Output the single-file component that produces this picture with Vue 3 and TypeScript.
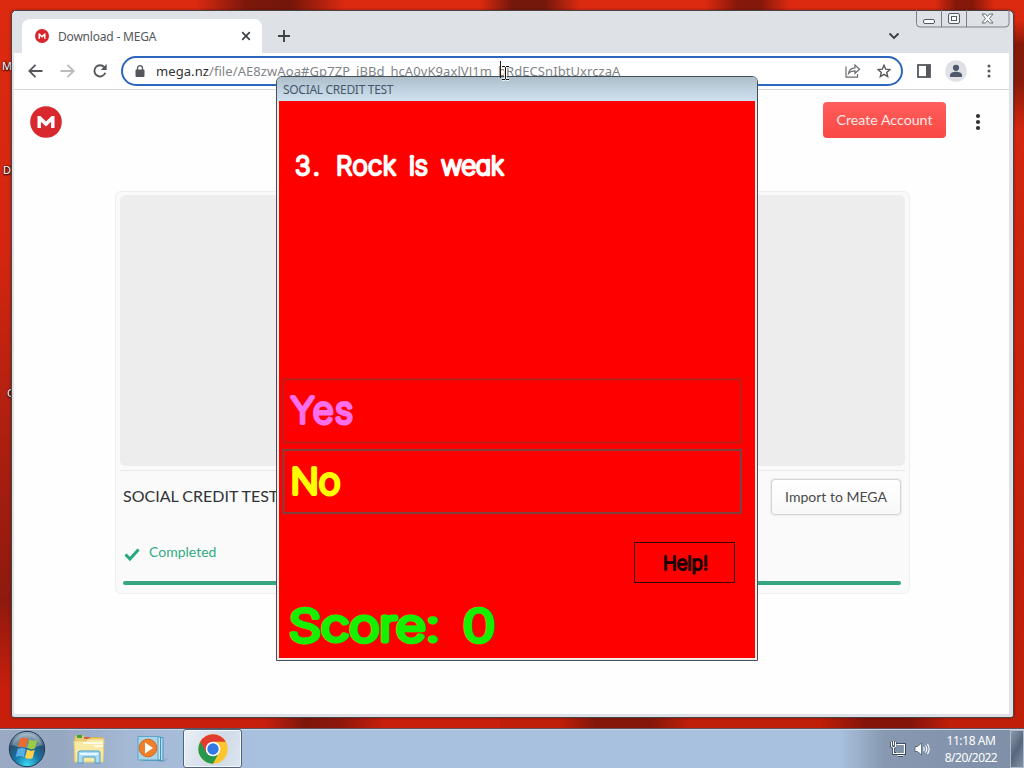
<script setup lang="ts">
interface Word { text: string; x: number; w: number }
const question: Word[] = [
  { text: '3.', x: 294, w: 26 },
  { text: 'Rock', x: 335, w: 61 },
  { text: 'is', x: 408, w: 20 },
  { text: 'weak', x: 440, w: 64 },
]
const desktopLabels = [
  { t: 'M', c: 'dl1' },
  { t: 'D', c: 'dl2' },
  { t: 'G', c: 'dl3' },
]
</script>

<template>
  <div class="desktop">
    <span v-for="l in desktopLabels" :key="l.c" class="dlabel" :class="l.c">{{ l.t }}</span>

    <div class="browser">
      <div class="strip">
        <div class="tab">
          <svg class="fav" width="14" height="14" viewBox="0 0 32 32"><circle cx="16" cy="16" r="16" fill="#d9272e" /><path d="M8 22V10h3l5 5.500 5-5.500h3v12h-3.500v-6L16 20l-4.500-4v6z" fill="#fff" /></svg>
          <span class="tabtitle">Download - MEGA</span>
          <svg width="10" height="10" viewBox="0 0 10 10"><path d="M1.200 1.200l7.600 7.600M8.800 1.200L1.200 8.800" stroke="#3c4043" stroke-width="1.700" /></svg>
        </div>
        <svg class="plus" width="12" height="12" viewBox="0 0 12 12"><path d="M6 0v12M0 6h12" stroke="#3c4043" stroke-width="1.900" /></svg>
        <svg class="chev" width="12" height="8" viewBox="0 0 12 8"><path d="M1.500 1.500L6 6l4.500-4.500" fill="none" stroke="#3c4043" stroke-width="1.900" /></svg>
        <svg class="controls" width="94" height="19" viewBox="0 0 94 19">
          <path d="M.5 0v13.500q0 3.500 3.500 3.500h85q4 0 4-3.500V0M25.500 0v17M50.500 0v17" fill="none" stroke="#7d8187" />
          <rect x="7.500" y="9.500" width="11" height="4" rx="1.500" fill="#fff" stroke="#555b66" />
          <rect x="32.500" y="3.500" width="11" height="10" rx="1.500" fill="#f4f5f7" stroke="#555b66" />
          <rect x="35.500" y="6.500" width="5" height="4" fill="#fff" stroke="#555b66" />
          <path d="M66 4h3.500l2 2.500L73.500 4H77l-3.500 4.500L77 13h-3.500l-2-2.500-2 2.500H66l3.500-4.500z" fill="#fff" stroke="#5a606a" stroke-width=".9" />
        </svg>
      </div>
      <div class="toolbar">
        <svg class="nav" width="86" height="20" viewBox="0 0 86 20">
          <path d="M16.500 10H3.500M9.500 3.800L3.300 10l6.200 6.200" fill="none" stroke="#54585c" stroke-width="1.800" />
          <path d="M34.500 10h13M41.500 3.800L47.700 10l-6.200 6.200" fill="none" stroke="#b9bbbe" stroke-width="1.800" />
          <path d="M78.300 6.200A5.600 5.600 0 1 0 79.300 11.700" fill="none" stroke="#54585c" stroke-width="1.900" /><path d="M80.700 3v6h-6z" fill="#54585c" />
        </svg>
        <div class="omni">
          <svg width="10" height="12" viewBox="0 0 10 12"><rect x=".5" y="4.500" width="9" height="7.500" rx="1" fill="#54585c" /><path d="M2.500 5V3.200a2.500 2.500 0 0 1 5 0V5" fill="none" stroke="#54585c" stroke-width="1.300" /></svg>
          <span class="url"><b>mega.nz</b>/file/AE8zwAoa#Gp7ZP_jBBd_hcA0vK9axlVJ1m_bRdECSnIbtUxrczaA</span>
          <svg class="share" width="16" height="14" viewBox="0 0 16 14"><path d="M1 2.500v10.700h11.500V10M3.500 9.500C4 5.500 6.500 4 10 3.800V1l4.500 4.300L10 9.300V6.800C7 6.800 5 7.500 3.500 9.500z" fill="none" stroke="#686c70" stroke-width="1.200" /></svg>
          <svg width="14" height="14" viewBox="0 0 14 14"><path d="M7 1.300l1.700 3.900 4.200.4-3.200 2.800 1 4.200L7 10.400l-3.700 2.200 1-4.200L1.100 5.600l4.200-.4z" fill="none" stroke="#54585c" stroke-width="1.400" /></svg>
        </div>
        <svg class="panel" width="14" height="14" viewBox="0 0 14 14"><rect x="1" y="1" width="12" height="12" fill="#fff" stroke="#54585c" stroke-width="1.800" /><path d="M9 1h4v12H9z" fill="#54585c" /></svg>
        <svg class="user" width="22" height="22" viewBox="0 0 22 22"><circle cx="11" cy="11" r="10.800" fill="#dfe1e7" /><circle cx="11" cy="7.800" r="3.100" fill="#50596b" /><path d="M5 17v-1.800c0-2.500 3-3.500 6-3.500s6 1 6 3.500V17z" fill="#50596b" /></svg>
        <svg class="more" width="4" height="14" viewBox="0 0 4 14"><circle cx="2" cy="2" r="1.500" fill="#54585c" /><circle cx="2" cy="7" r="1.500" fill="#54585c" /><circle cx="2" cy="12" r="1.500" fill="#54585c" /></svg>
      </div>
      <div class="page">
        <header>
          <svg width="32" height="32" viewBox="0 0 32 32"><circle cx="16" cy="16" r="15.800" fill="#d9272e" /><path d="M7.500 22V10h2.900l5.600 5.500 5.600-5.500h2.900v12h-3.400v-6.200L16 20.600l-5.100-4.800V22z" fill="#fff" /></svg>
          <div class="create">Create Account</div>
          <svg class="kebab" width="6" height="18" viewBox="0 0 6 18"><circle cx="3" cy="3" r="2.100" fill="#333" /><circle cx="3" cy="9" r="2.100" fill="#333" /><circle cx="3" cy="15" r="2.100" fill="#333" /></svg>
        </header>
        <main class="card">
          <div class="preview"></div>
          <div class="row">
            <span class="fname">SOCIAL CREDIT TEST</span>
            <div class="import">Import to MEGA</div>
          </div>
          <div class="status">
            <svg width="16" height="13" viewBox="0 0 16 13"><path d="M1.500 6.500l4.500 4.500 8.500-9.500" fill="none" stroke="#23a97a" stroke-width="3" /></svg>
            <span>Completed</span>
          </div>
          <div class="bar"></div>
        </main>
      </div>
    </div>

    <div class="dialog">
      <div class="title">SOCIAL CREDIT TEST</div>
      <div class="body">
        <svg width="476" height="557" viewBox="279 101 476 557" class="hand">
          <g fill="#fff" stroke="#fff" stroke-width="2.600" font-size="26">
            <text v-for="q in question" :key="q.text" :x="q.x + 1" y="175" :textLength="q.w - 1">{{ q.text }}</text>
          </g>
          <rect x="283.500" y="379.500" width="457" height="63" fill="none" stroke="#a52a20" stroke-width="1.500" />
          <rect x="283.500" y="450" width="457.500" height="63" fill="none" stroke="#81403c" stroke-width="2.200" />
          <g font-size="35.500" stroke-width="4">
            <text x="291" y="422.500" textLength="62" fill="#fa6eea" stroke="#fa6eea">Yes</text>
            <text x="290.500" y="494" textLength="50" lengthAdjust="spacingAndGlyphs" fill="#ff0" stroke="#ff0">No</text>
          </g>
          <rect x="634.500" y="542.500" width="100" height="40" fill="none" stroke="#3a0000" />
          <text x="663" y="569.500" font-size="18.500" stroke-width="2" textLength="45" fill="#190000" stroke="#190000">Help!</text>
          <g font-size="43" stroke-width="5" fill="#16f000" stroke="#16f000">
            <text x="289" y="641" textLength="151" lengthAdjust="spacingAndGlyphs">Score:</text>
            <text x="463" y="641" textLength="32" lengthAdjust="spacingAndGlyphs">0</text>
          </g>
        </svg>
      </div>
    </div>

    <svg class="caret" width="12" height="22" viewBox="0 0 12 22"><path d="M1.500 1v17" stroke="#222" /><path d="M3 6.500h3M7 6.500h3M6.500 7v12M3 19.500h3M7 19.500h3" stroke="#fff" stroke-width="2.500" /><path d="M3 6.500h3M7 6.500h3M6.500 7v12M3 19.500h3M7 19.500h3" stroke="#111" fill="none" /></svg>

    <div class="taskbar">
      <svg class="orb" width="38" height="38" viewBox="0 0 38 38">
        <defs>
          <radialGradient id="orb" cx=".5" cy=".95" r=".9"><stop offset="0" stop-color="#3fd9f5" /><stop offset=".4" stop-color="#1677a8" /><stop offset=".75" stop-color="#28506f" /><stop offset="1" stop-color="#8ca6ba" /></radialGradient>
        </defs>
        <circle cx="19" cy="19" r="17.700" fill="url(#orb)" stroke="#22384c" />
        <path d="M4 15a15.500 15.500 0 0 1 30 0q-15 6-30 0z" fill="#fff" opacity=".3" />
        <path d="M12 9q4-2.500 8 0l-2 8.500q-4-2-8 0z" fill="#ee6a2c" />
        <path d="M21.300 9.600q4 2.200 8 .2l-2.200 8.400q-4 2-7.800-.2z" fill="#9acb45" />
        <path d="M9.700 18.900q4-2 8 0l-2 8q-4-2-8 0z" fill="#58aee8" />
        <path d="M19 19.600q4 2.200 7.800.2l-2.100 8.100q-4 2-7.700-.2z" fill="#fdd04b" />
      </svg>
      <svg class="explorer" width="34" height="32" viewBox="0 0 34 32">
        <path d="M3 2l8-.5 2 2h17.500v24H2z" fill="#e9cc72" stroke="#d5b35a" />
        <path d="M5 1h5v3H5z" fill="#3aa546" /><path d="M12 3h6v2h-6z" fill="#d35f45" /><path d="M20 6h6v2h-6z" fill="#4a8bd3" />
        <path d="M2 7h12l2-2h16l-1 23H3z" fill="#f8e9a4" stroke="#e6cb78" />
        <path d="M11 9h20M22 12h9" stroke="#fffbe0" stroke-width="2" />
        <path d="M6 29V19q0-2 2-2h18q2 0 2 2v10h-5v-6H11v6z" fill="#a9dcf3" stroke="#4c9fcb" />
        <path d="M8 20h18" stroke="#e6f8ff" stroke-width="2" />
      </svg>
      <svg class="media" width="32" height="28" viewBox="0 0 32 28">
        <path d="M7 2.500h19v23H7z" fill="#b4dcf0" stroke="#4795bd" /><path d="M3 2h19v23H3z" transform="translate(1.500)" fill="#c5e4f3" stroke="#4795bd" /><path d="M1 1.500h20v23.500H1z" fill="#a9d3e8" stroke="#5ea5c8" />
        <path d="M26 25l5-2-3 4h-9z" fill="#7895b8" opacity=".5" />
        <circle cx="11" cy="13" r="8.800" fill="#ee802c" stroke="#d96418" /><path d="M8 7.500l8 5.500-8 5.500z" fill="#fff" />
      </svg>
      <div class="active">
        <svg width="30" height="30" viewBox="0 0 30 30">
          <circle cx="15" cy="15" r="14.700" fill="#fdc62e" />
          <path d="M15 15h-7L2.270 7.650A14.700 14.700 0 0 0 15 29.700l6.100-11.200z" fill="#26984d" />
          <path d="M2.270 7.650A14.700 14.700 0 0 1 27.730 7.650H15L8.500 19z" fill="#e23c30" />
          <circle cx="15" cy="15" r="7.300" fill="#fff" /><circle cx="15" cy="15" r="5.700" fill="#3379e4" />
        </svg>
      </div>
      <div class="tray">
        <svg width="16" height="16" viewBox="0 0 16 16"><path d="M5 3.500h10v9H5M8 14.500h5M1.500 1v4q0 1.500 2 1.500t2-1.500V1M3.500 0v4M3.500 7v5.500h3" fill="none" stroke="#24364c" stroke-width="2.600" /><path d="M6 4h8.500v8H6" fill="#8192a8" /><path d="M6.500 3.500h8v9H5M7.500 14.500h6M1.500 1v4q0 1.500 2 1.500t2-1.500V1M3.500 0v4M3.500 7v5.500h3" fill="none" stroke="#fff" stroke-width="1.200" /></svg>
        <svg class="vol" width="16" height="14" viewBox="0 0 16 14"><path d="M1 4.500h2.500L7.500 1v12L3.500 9.500H1z" fill="#fff" stroke="#3a4b60" stroke-width=".7" /><path d="M9.500 5q1.500 2 0 4M11.500 3.500q2.500 3.500 0 7M13.500 2q3.200 5 0 10" fill="none" stroke="#fff" stroke-width="1.100" /></svg>
        <div class="clock"><span>11:18 AM</span><span class="date">8/20/2022</span></div>
        <div class="peek"></div>
      </div>
    </div>
  </div>
</template>

<style>
html, body { margin: 0; overflow: hidden; }
</style>

<style scoped>
* { box-sizing: border-box; }
.desktop {
  position: relative; width: 1024px; height: 768px; overflow: hidden; font-family: "Noto Sans", "Open Sans", sans-serif;
  background:
    linear-gradient(180deg, transparent 20px, #861a0a 45px, #861a0a 80px, transparent 130px) 1013px 0 / 11px 140px no-repeat,
    linear-gradient(90deg, transparent 265px, #7d160c 305px, #8e170b 340px, transparent 385px, transparent 560px, #84170a 595px, #84170a 650px, transparent 690px, transparent 820px, #84140a 865px, #84140a 910px, transparent 950px) 0 717px / 1024px 12px no-repeat,
    linear-gradient(90deg, transparent 195px, #7d180c 245px, #74160a 290px, transparent 345px, transparent 480px, #74180b 512px, #74180b 545px, transparent 580px, transparent 705px, #84180a 738px, #84180a 760px, transparent 790px, transparent 935px, #84180a 956px, #84180a 972px, transparent 995px) 0 0 / 1024px 10px no-repeat,
    linear-gradient(180deg, #dc2a10 0, #d4260f 250px, #b02010 420px, #8e1a0e 600px, #c81f0c 690px, #c9200d 768px) 0 0 / 500px 768px no-repeat,
    linear-gradient(180deg, #dc2a10 0, #cc240e 250px, #c01f0a 600px, #c01e08 768px);
}
.desktop svg { display: block; flex: none; }
.dlabel { position: absolute; font-size: 11px; line-height: 14px; color: #fff; text-shadow: 0 1px 2px #000, 1px 0 2px #000; }
.dl1 { left: 2px; top: 59px; }
.dl2 { left: 3px; top: 163px; }
.dl3 { left: 7px; top: 386px; }
.browser { position: absolute; left: 11px; top: 10px; width: 1003px; height: 708px; border: 1px solid #4b4245; border-radius: 5px 5px 3px 3px; background: #dee1e6; padding: 0 4px 3px 2px; box-shadow: 0 0 3px rgba(40, 0, 0, .4); }
.strip { height: 42px; display: flex; background: #dee1e6; padding-left: 8px; position: relative; }
.tab { width: 240px; height: 34px; margin-top: 8px; background: #fff; border-radius: 8px 8px 0 0; display: flex; align-items: center; padding: 0 11px 0 13px; }
.tabtitle { font-size: 12px; color: #55585c; margin-left: 9px; flex: 1; letter-spacing: -.2px; }
.plus { margin: 19px 0 0 16px; }
.chev { margin: 21px 109px 0 auto; }
.controls { position: absolute; right: -1px; top: -1px; }
.toolbar { height: 37px; background: #fff; border-bottom: 1px solid #d5d7da; display: flex; align-items: center; padding-left: 12px; }
.omni { width: 782px; height: 30px; border: 2px solid #2c66bd; border-radius: 15px; margin-left: 9px; display: flex; align-items: center; padding: 0 10px 0 12px; background: #fff; }
.url { font-size: 13px; color: #808488; margin-left: 11px; flex: 1; white-space: nowrap; letter-spacing: .08px; }
.url b { font-weight: 400; color: #303235; }
.share { margin-right: 16px; }
.panel { margin-left: 14px; }
.user { margin-left: 14px; }
.more { margin-left: 20px; }
.page { height: 624px; background: #fefefe; font-family: Lato, sans-serif; padding: 0 0 0 101px; }
header { height: 101px; margin-left: -101px; padding: 12px 19px 0 16px; display: flex; align-items: flex-start; }
header > svg:first-child { margin-top: 4px; }
.create { margin-left: auto; width: 123px; height: 36px; border-radius: 4px; background: linear-gradient(#ff5e5c, #f94843); color: #ffe9e6; font-size: 14.200px; line-height: 35px; text-align: center; }
.kebab { margin: 11px 9px 0 29px; }
.card { width: 795px; height: 403px; border: 1px solid #efefef; border-radius: 6px; background: #fafafa; padding: 3px 4px; }
.preview { height: 271px; background: #ededed; border-radius: 6px; }
.row { height: 62px; border-top: 1px solid #e9e9e9; margin-top: 4px; display: flex; padding: 8px 4px 0 3px; justify-content: space-between; }
.fname { font-size: 16px; line-height: 20px; margin-top: 7px; color: #303336; }
.import { width: 130px; height: 36px; border: 1px solid #d4d4d4; border-radius: 4px; background: linear-gradient(#fff, #f8f8f8); box-shadow: 0 0 2px #ccc; text-align: center; line-height: 33px; font-size: 14px; color: #4a4a4a; }
.status { display: flex; height: 49px; color: #32aa83; font-size: 14px; padding: 11px 0 0 4px; line-height: 18px; }
.status svg { margin: 5px 9px 0 0; }
.bar { height: 4px; border-radius: 2px; background: #37a57f; margin: 0 4px 0 3px; }
.dialog { position: absolute; left: 276px; top: 76px; width: 482px; height: 585px; border: 1px solid #42505b; border-radius: 6px 6px 0 0; background: #f9e8e4; padding: 0 2px 2px 2px; }
.title { height: 24px; margin: 0 -2px; border-radius: 5px 5px 0 0; background: linear-gradient(#aebfca, #bfd0df 50%, #cfe0ee); color: #455768; font-size: 12px; line-height: 25px; padding-left: 6px; letter-spacing: -.3px; }
.body { height: 557px; background: #f00; }
.hand text { font-family: "Comic Sans MS", Inter, sans-serif; font-weight: 200; font-feature-settings: "cv11"; stroke-linejoin: round; stroke-linecap: round; }
.caret { position: absolute; left: 499px; top: 60px; }
.taskbar { position: absolute; left: 0; top: 728px; width: 1024px; height: 40px; border-top: 1px solid #5b5363; box-shadow: inset 0 1px #ccd6e3; display: flex; align-items: center; background: linear-gradient(90deg, #9aaac4 0, #96a7c1 60px, #a4b9d5 130px, #a8c1de 260px, #a8c1de 840px, #8798b0 885px, #7e8fa7 1024px); }
.orb { margin-left: 8px; }
.explorer { margin: 2px 0 0 26px; }
.media { margin: 1px 0 0 31px; }
.active { width: 59px; height: 39px; border: 1px solid #52647c; border-radius: 3px; margin-left: 14px; box-shadow: inset 0 0 0 1px #f4f8fc; background: linear-gradient(110deg, #e9eff5, #cfdae8 60%, #dde6ef); display: flex; align-items: center; justify-content: center; }
.tray { margin-left: auto; display: flex; align-items: center; height: 39px; }
.vol { margin-left: 8px; }
.clock { width: 77px; margin-left: 3px; margin-right: 2px; display: flex; flex-direction: column; text-align: center; color: #fff; font-size: 12px; line-height: 17px; letter-spacing: -.4px; padding-right: 1px; }
.date { letter-spacing: -.5px; }
.peek { width: 14px; height: 38px; border: 1px solid #b0bccb; margin-left: -2px; background: linear-gradient(120deg, #8b9bad, #56677c 50%, #8191a5); }
</style>
